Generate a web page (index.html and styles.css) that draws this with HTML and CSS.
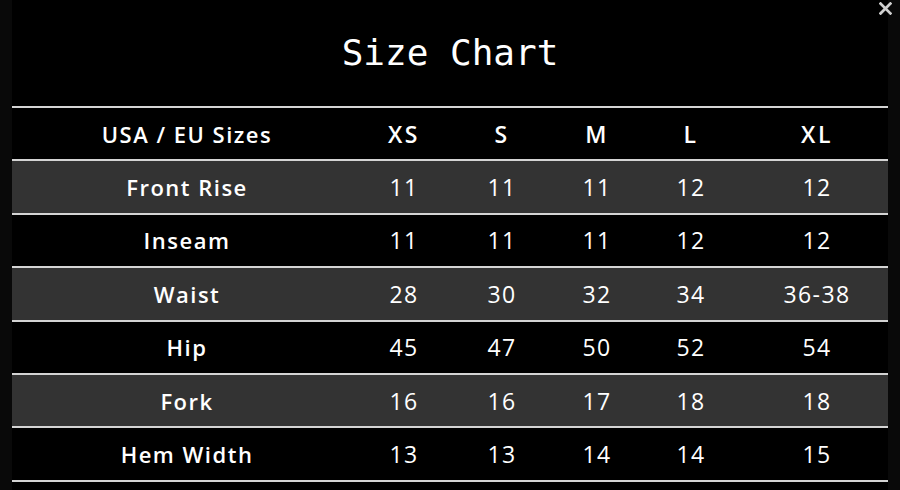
FILE: index.html
```html
<!DOCTYPE html>
<html>
<head>
<meta charset="utf-8">
<link rel="stylesheet" href="styles.css">
</head>
<body>
<div class="modal">
  <svg class="close" viewBox="0 0 12 12" width="13" height="13"><path d="M1.5 1.5 L10.5 10.5 M10.5 1.5 L1.5 10.5" stroke="#cfcfcf" stroke-width="2.6" stroke-linecap="square" fill="none"/></svg>
  <h1 class="title">Size Chart</h1>
  <div class="chart">
    <div class="row head">
      <div class="label">USA / EU Sizes</div><div>XS</div><div>S</div><div>M</div><div>L</div><div>XL</div>
    </div>
    <div class="row shade">
      <div class="label">Front Rise</div><div>11</div><div>11</div><div>11</div><div>12</div><div>12</div>
    </div>
    <div class="row">
      <div class="label">Inseam</div><div>11</div><div>11</div><div>11</div><div>12</div><div>12</div>
    </div>
    <div class="row shade">
      <div class="label">Waist</div><div>28</div><div>30</div><div>32</div><div>34</div><div>36-38</div>
    </div>
    <div class="row">
      <div class="label">Hip</div><div>45</div><div>47</div><div>50</div><div>52</div><div>54</div>
    </div>
    <div class="row shade">
      <div class="label">Fork</div><div>16</div><div>16</div><div>17</div><div>18</div><div>18</div>
    </div>
    <div class="row last">
      <div class="label">Hem Width</div><div>13</div><div>13</div><div>14</div><div>14</div><div>15</div>
    </div>
  </div>
</div>
</body>
</html>
```
FILE: styles.css
```css
html, body {
  margin: 0;
  padding: 0;
  background: #090909;
  height: 490px;
  overflow: hidden;
}
.modal {
  position: relative;
  margin: 0 12px;
  background: #000;
  height: 490px;
  color: #fff;
  font-family: "Open Sans", Lato, sans-serif;
}
.close {
  position: absolute;
  top: 2px;
  right: -4px;
}
.title {
  margin: 0;
  height: 106px;
  display: flex;
  align-items: center;
  justify-content: center;
  font-family: "DejaVu Sans Mono", monospace;
  font-weight: normal;
  font-size: 36px;
  padding-bottom: 2px;
  box-sizing: border-box;
}
.row {
  display: grid;
  grid-template-columns: 350px 84px 112px 78px 110px 1fr;
  align-items: center;
  text-align: center;
  height: 53.4px;
  box-sizing: border-box;
  border-top: 2px solid #d4d4d4;
  font-size: 23px;
  letter-spacing: 1.4px;
}
.row.last {
  border-bottom: 2px solid #d4d4d4;
  height: 55.4px;
}
.row.shade {
  background: #333;
}
.head {
  font-weight: 600;
  letter-spacing: 2.5px;
}
.label {
  font-weight: 600;
  font-size: 22px;
  letter-spacing: 1.5px;
}
```
